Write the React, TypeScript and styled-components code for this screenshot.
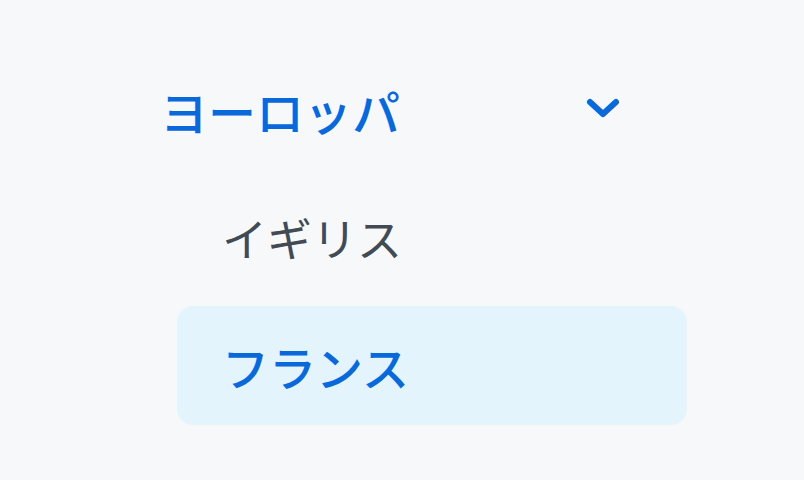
import React from "react";
import styled, { createGlobalStyle } from "styled-components";

const Global = createGlobalStyle`
  html, body { margin: 0; padding: 0; background: #f6f8fa; }
  body { font-family: "Noto Sans CJK JP", "Noto Sans", sans-serif; }
`;

const Page = styled.div`
  width: 804px;
  height: 480px;
  box-sizing: border-box;
  padding: 62px 0 0 160px;
  background: #f6f8fa;
`;

const Nav = styled.nav`
  display: flex;
  flex-direction: column;
  width: 527px;
`;

const Header = styled.button`
  display: flex;
  align-items: center;
  justify-content: space-between;
  width: 461px;
  height: 96px;
  padding: 0;
  border: 0;
  background: transparent;
  color: #0969da;
  font-family: inherit;
  font-size: 48px;
  font-weight: 500;
  cursor: pointer;
`;

const Chevron = styled.svg`
  width: 36px;
  height: 24px;
  margin-bottom: 2px;
`;

const List = styled.ul`
  list-style: none;
  margin: 20px 0 0 17px;
  padding: 0;
  display: flex;
  flex-direction: column;
  gap: 9px;
`;

const Item = styled.li<{ $active?: boolean }>`
  display: flex;
  align-items: center;
  width: 510px;
  height: 119px;
  box-sizing: border-box;
  padding-left: 45px;
  border-radius: 16px;
  background: ${(p) => (p.$active ? "#e3f4fd" : "transparent")};
  color: ${(p) => (p.$active ? "#0969da" : "#424a53")};
  font-size: ${(p) => (p.$active ? "47px" : "45px")};
  font-weight: ${(p) => (p.$active ? 500 : 400)};
`;

export default function App() {
  return (
    <>
      <Global />
      <Page>
        <Nav>
          <Header>
            <span>ヨーロッパ</span>
            <Chevron viewBox="0 0 36 24">
              <path d="M5 5 L18 17 L31 5" fill="none" stroke="#0969da" strokeWidth="6" strokeLinecap="round" strokeLinejoin="round" />
            </Chevron>
          </Header>
          <List>
            <Item>イギリス</Item>
            <Item $active>フランス</Item>
          </List>
        </Nav>
      </Page>
    </>
  );
}
